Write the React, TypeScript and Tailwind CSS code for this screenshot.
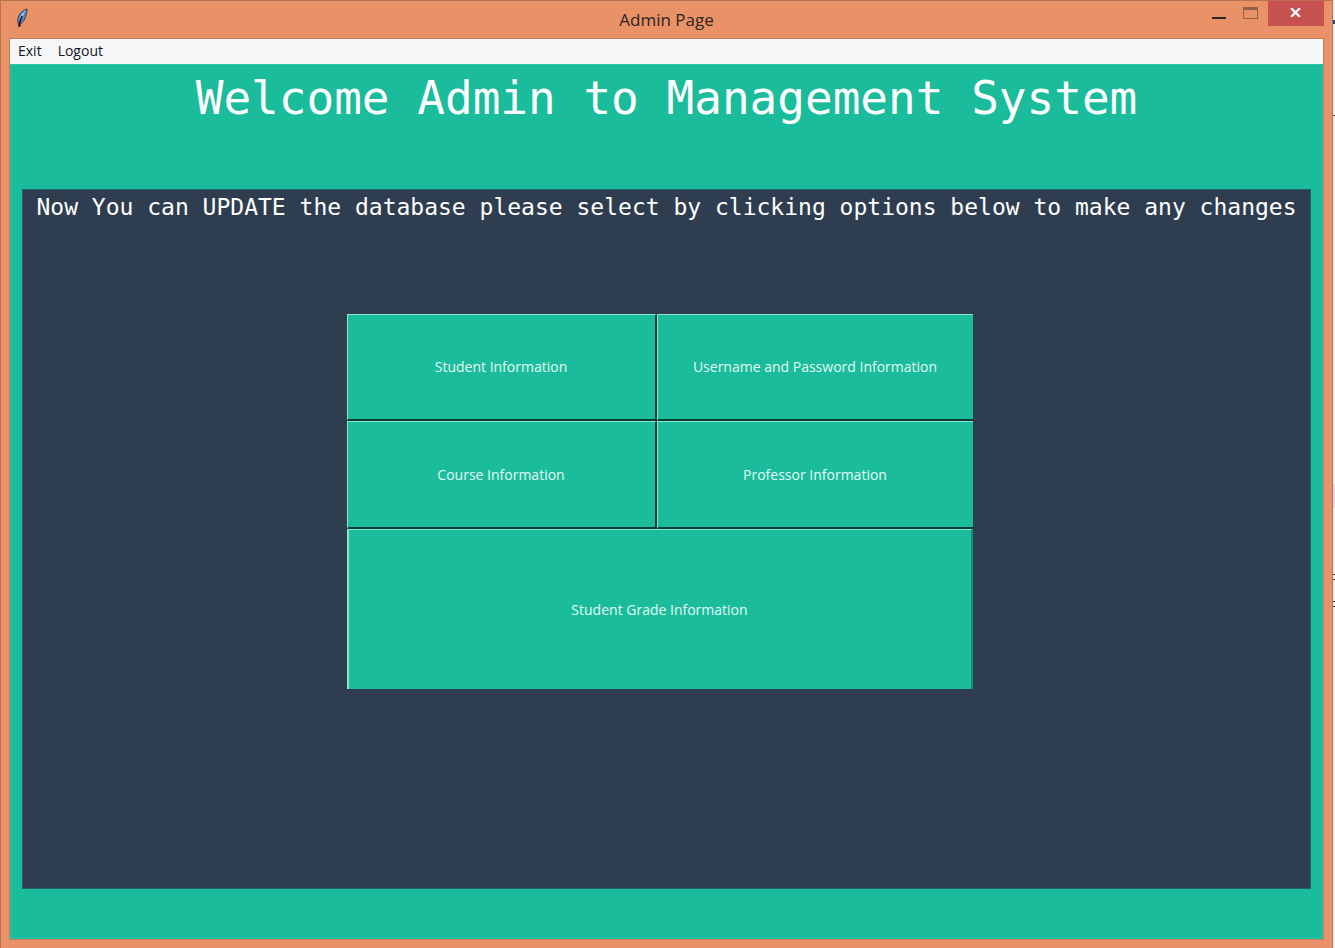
import React from "react";

const tile =
  "flex items-center justify-center bg-[#1abc9c] text-[14px] leading-5 text-[#e2fbf3] border-t border-t-[#85e9cb] border-l border-l-[#85e9cb] outline-none";

function Feather() {
  return (
    <svg width="14" height="20" viewBox="0 0 14 20" aria-hidden="true">
      <path d="M12 1 C9 1.5 5 4.5 3.4 9 C2.6 11.5 2.6 13.5 3.2 15 L3.8 18.5 L5 18.5 L5.4 15.8 C8.3 14 10.2 11 11 7 C11.4 5 12.2 2.8 12 1 Z" fill="#4f86cc" stroke="#4a3a38" strokeWidth="1" />
      <path d="M10.8 2.4 C8 4 5.4 7 4.2 11 L5 12.5 C7 9.5 8.5 6.5 10.8 2.4 Z" fill="#9cc8f2" />
      <path d="M7 8 C6 10.5 4.6 13 4.2 18.5" fill="none" stroke="#111" strokeWidth="1.4" />
    </svg>
  );
}

function TitleBar() {
  return (
    <header className="grid h-[37px] grid-cols-3 items-start">
      <div className="pt-[7px] pl-[14px]">
        <Feather />
      </div>
      <h1 className="pt-[7px] text-center text-[17px] leading-6 text-[#2b2523]">Admin Page</h1>
      <div className="flex justify-end pr-2">
        <button type="button" aria-label="Minimize" className="flex h-[25px] w-8 items-center justify-center">
          <svg width="32" height="25" aria-hidden="true">
            <rect x="8" y="16" width="14" height="2" fill="#2b2523" />
          </svg>
        </button>
        <button type="button" aria-label="Maximize" className="flex h-[25px] w-8 items-center justify-center">
          <svg width="32" height="25" aria-hidden="true">
            <rect x="7.5" y="6.5" width="14" height="11" fill="none" stroke="#95604a" />
            <rect x="7" y="6" width="15" height="3" fill="#95604a" />
          </svg>
        </button>
        <button type="button" aria-label="Close" className="flex h-[25px] w-14 items-start justify-center bg-[#c75050] pt-[7px]">
          <svg width="11" height="9" viewBox="0 0 11 9" aria-hidden="true">
            <path d="M1 0 L10 9 M10 0 L1 9" stroke="#fff" strokeWidth="2.2" />
          </svg>
        </button>
      </div>
    </header>
  );
}

export default function App() {
  return (
    <div className="flex min-h-screen bg-[#f4f3f5] font-['Open_Sans','Noto_Sans',sans-serif]">
      <div className="flex min-w-0 flex-1 flex-col border-x border-t border-[#b87252] bg-[#e99167] pb-2">
        <TitleBar />
        <div className="mx-2 flex flex-1 flex-col border border-[#c47a58] bg-[#1abc9c]">
          <nav className="flex h-[25px] items-center gap-4 bg-[#f4f6f8] pb-px pl-2 text-[14px] leading-5 text-[#17171b]">
            <button type="button">Exit</button>
            <button type="button">Logout</button>
          </nav>
          <main className="flex flex-1 flex-col border border-[#2bc6a5] px-[11px] pb-[49px]">
            <h2 className="h-[124px] pt-[3px] text-center font-['DejaVu_Sans_Mono',monospace] text-[46px] leading-[60px] whitespace-nowrap text-white">
              Welcome Admin to Management System
            </h2>
            <section className="flex flex-1 flex-col items-center border border-[#27626a] bg-[#2e3e50]">
              <p className="h-[124px] pt-[3px] text-center font-['DejaVu_Sans_Mono',monospace] text-[23px] leading-7 whitespace-nowrap text-white">
                Now You can UPDATE the database please select by clicking options below to make any changes
              </p>
              <div className="pr-[14px]">
                <div className="grid grid-cols-[310px_316px] grid-rows-[107px_108px_160px]">
                  <button type="button" className={`${tile} border-r-2 border-b-2 border-r-[#0e3b36] border-b-[#0e3b36]`}>
                    Student Information
                  </button>
                  <button type="button" className={`${tile} border-b-2 border-b-[#0e3b36]`}>
                    Username and Password Information
                  </button>
                  <button type="button" className={`${tile} border-r-2 border-b-2 border-r-[#0e3b36] border-b-[#0e3b36]`}>
                    Course Information
                  </button>
                  <button type="button" className={`${tile} border-b-2 border-b-[#0e3b36]`}>
                    Professor Information
                  </button>
                  <button type="button" className={`${tile} col-span-2 border-l-2 border-r-2 border-r-[#168f7a]`}>
                    Student Grade Information
                  </button>
                </div>
              </div>
            </section>
          </main>
        </div>
      </div>
      <aside aria-hidden="true" className="flex w-[2px] flex-col">
        <div className="mt-5 h-1 bg-[#1d4c80]" />
        <div className="mt-[91px] h-px bg-[#444]" />
        <div className="mt-[368px] h-6 bg-[#dcd6ee]" />
        <div className="mt-[66px] h-px bg-[#333]" />
        <div className="mt-1 h-px bg-[#333]" />
        <div className="mt-[21px] h-px bg-[#333]" />
        <div className="mt-1 h-px bg-[#333]" />
      </aside>
    </div>
  );
}
